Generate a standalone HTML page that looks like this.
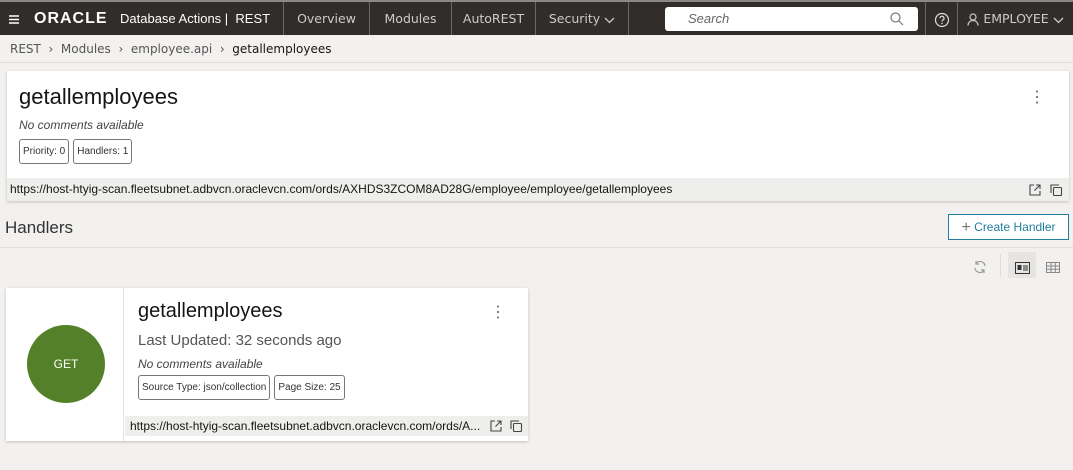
<!DOCTYPE html>
<html><head><style>
*{box-sizing:border-box;margin:0;padding:0}
body{width:1073px;height:470px;overflow:hidden;background:#f2f1ef;font-family:"Liberation Sans",sans-serif;color:#161513;position:relative}
.nav{position:absolute;top:0;left:0;width:1073px;height:35px;background:#312d2a;border-top:2px solid #8a8785;color:#fff}
.nav div{position:absolute;top:0;height:33px;line-height:33px;font-size:13px}
.sep{border-left:1px solid #6b6865}
.tab{color:#ccc;font-family:"DejaVu Sans",sans-serif;font-size:12.5px !important;text-align:center}
.crumb{position:absolute;top:42px;left:10px;font-size:12px;color:#555;font-family:"DejaVu Sans",sans-serif}
.card{position:absolute;background:#fff;box-shadow:0 1px 3px rgba(0,0,0,.2)}
.chip{display:inline-block;border:1px solid #777;border-radius:3px;font-size:10px;padding:6px 3px;margin-right:4px;color:#333;line-height:11px}
.url{position:absolute;background:#eeeeed;font-size:12px;color:#161513}
svg{display:inline-block;vertical-align:middle}
</style></head><body>
<div class="nav">
<div style="left:9px;top:0"><svg width="11" height="33" viewBox="0 0 11 33"><path d="M0 13h10M0 16.5h10M0 20h10" stroke="#fff" stroke-width="1.4"/></svg></div>
<div style="left:34px;font-weight:bold;font-size:16px;letter-spacing:1px">ORACLE</div>
<div style="left:120px;font-size:13px">Database Actions | &nbsp;REST</div>
<div class="sep tab" style="left:283px;width:86px">Overview</div>
<div class="sep tab" style="left:369px;width:82px">Modules</div>
<div class="sep tab" style="left:451px;width:84px">AutoREST</div>
<div class="sep tab" style="left:535px;width:93px">Security <svg width="11" height="8" viewBox="0 0 11 8"><path d="M1 2l4.5 4.5L10 2" stroke="#ccc" fill="none" stroke-width="1.3"/></svg></div>
<div class="sep" style="left:628px;width:1px"></div>
<div style="left:665px;top:5px;width:253px;height:24px;background:#fff;border-radius:3px;line-height:24px;color:#666;font-style:italic;padding-left:23px">Search<svg style="position:absolute;right:14px;top:5px" width="14" height="14" viewBox="0 0 14 14"><circle cx="5.5" cy="5.5" r="4.5" stroke="#777" fill="none" stroke-width="1.2"/><path d="M9 9l4 4" stroke="#777" stroke-width="1.2"/></svg></div>
<div class="sep" style="left:925px;width:32px;text-align:center"><svg width="16" height="16" viewBox="0 0 16 16"><circle cx="8" cy="8" r="6.5" stroke="#ddd" fill="none" stroke-width="1.2"/><path d="M6 6.3a2 2 0 1 1 2.8 1.8c-.6.3-.8.7-.8 1.4" stroke="#ddd" fill="none" stroke-width="1.2"/><circle cx="8" cy="11.4" r=".8" fill="#ddd"/></svg></div>
<div class="sep tab" style="left:957px;width:116px"><svg width="12" height="13" viewBox="0 0 12 13"><circle cx="6" cy="4" r="3" stroke="#ccc" fill="none" stroke-width="1.2"/><path d="M1 12.5c0-3 2.2-5 5-5s5 2 5 5" stroke="#ccc" fill="none" stroke-width="1.2"/></svg> EMPLOYEE <svg width="11" height="8" viewBox="0 0 11 8"><path d="M1 2l4.5 4.5L10 2" stroke="#ccc" fill="none" stroke-width="1.3"/></svg></div>
</div>
<div class="crumb">REST &nbsp;›&nbsp; Modules &nbsp;›&nbsp; employee.api &nbsp;›&nbsp; <span style="color:#161513">getallemployees</span></div>
<div style="position:absolute;top:62px;left:0;width:1073px;height:1px;background:#ddd"></div>
<div class="card" style="left:7px;top:71px;width:1062px;height:130px">
<div style="position:absolute;left:12px;top:13px;font-size:22px">getallemployees</div>
<div style="position:absolute;right:24px;top:16px;font-size:16px;color:#666">⋮</div>
<div style="position:absolute;left:12px;top:47px;font-size:12px;font-style:italic;color:#444">No comments available</div>
<div style="position:absolute;left:12px;top:68px"><span class="chip">Priority: 0</span><span class="chip">Handlers: 1</span></div>
<div class="url" style="left:0;top:107px;width:1062px;height:23px;line-height:23px;padding-left:3px">https://host-htyig-scan.fleetsubnet.adbvcn.oraclevcn.com/ords/AXHDS3ZCOM8AD28G/employee/employee/getallemployees<span style="position:absolute;right:6px;top:0">
<svg width="14" height="14" viewBox="0 0 14 14"><path d="M6 2H2v10h10V8M8 2h4v4M12 2L6.5 7.5" stroke="#444" fill="none" stroke-width="1.1"/></svg>
<svg width="14" height="14" viewBox="0 0 14 14" style="margin-left:4px"><rect x="4.5" y="4.5" width="8" height="8" rx="1" stroke="#444" fill="none" stroke-width="1.1"/><path d="M2 10V2h8" stroke="#444" fill="none" stroke-width="1.1"/></svg></span></div>
</div>
<div style="position:absolute;left:5px;top:218px;font-size:17px;color:#333">Handlers</div>
<div style="position:absolute;left:948px;top:214px;width:121px;height:26px;border:1px solid #227e9e;background:#fff;color:#227e9e;font-size:12px;line-height:24px;text-align:center"><span style="font-size:16px;color:#777;vertical-align:-1px">+</span> Create Handler</div>
<div style="position:absolute;top:247px;left:0;width:1073px;height:1px;background:#ddd"></div>
<div style="position:absolute;left:973px;top:258px"><svg width="14" height="14" viewBox="0 0 14 14"><path d="M12 6A5 5 0 0 0 3 3.5M2 8a5 5 0 0 0 9 2.5M3 1v3h3M11 13v-3H8" stroke="#999" fill="none" stroke-width="1.2"/></svg></div>
<div style="position:absolute;left:1000px;top:254px;width:1px;height:22px;background:#ddd"></div>
<div style="position:absolute;left:1008px;top:252px;width:28px;height:26px;background:#e6e5e3;text-align:center;padding-top:7px"><svg width="15" height="12" viewBox="0 0 15 12"><rect x=".5" y=".5" width="14" height="11" stroke="#333" fill="none"/><rect x="2.5" y="3" width="4" height="5" fill="#333"/><path d="M8 4h5M8 6h5M8 8h5" stroke="#333"/></svg></div>
<div style="position:absolute;left:1046px;top:259px"><svg width="14" height="11" viewBox="0 0 14 11"><rect x=".5" y=".5" width="13" height="10" stroke="#888" fill="none"/><path d="M.5 4h13M.5 7.3h13M5 .5v10M9.3 .5v10" stroke="#888"/></svg></div>
<div class="card" style="left:6px;top:288px;width:522px;height:153px">
<div style="position:absolute;left:0;top:0;width:118px;height:153px;border-right:1px solid #e0e0e0"></div>
<div style="position:absolute;left:21px;top:37px;width:78px;height:78px;border-radius:50%;background:#54802a;color:#fff;text-align:center;line-height:78px;font-size:12px">GET</div>
<div style="position:absolute;left:132px;top:12px;font-size:20px">getallemployees</div>
<div style="position:absolute;right:22px;top:14px;font-size:16px;color:#666">⋮</div>
<div style="position:absolute;left:132px;top:44px;font-size:15px;color:#555">Last Updated: 32 seconds ago</div>
<div style="position:absolute;left:132px;top:69px;font-size:12px;font-style:italic;color:#444">No comments available</div>
<div style="position:absolute;left:132px;top:87px"><span class="chip">Source Type: json/collection</span><span class="chip">Page Size: 25</span></div>
<div class="url" style="left:119px;top:128px;width:403px;height:20px;line-height:20px;padding-left:5px">https://host-htyig-scan.fleetsubnet.adbvcn.oraclevcn.com/ords/A...<span style="position:absolute;right:5px;top:-1px">
<svg width="14" height="14" viewBox="0 0 14 14"><path d="M6 2H2v10h10V8M8 2h4v4M12 2L6.5 7.5" stroke="#444" fill="none" stroke-width="1.1"/></svg>
<svg width="14" height="14" viewBox="0 0 14 14" style="margin-left:3px"><rect x="4.5" y="4.5" width="8" height="8" rx="1" stroke="#444" fill="none" stroke-width="1.1"/><path d="M2 10V2h8" stroke="#444" fill="none" stroke-width="1.1"/></svg></span></div>
</div>
</body></html>
